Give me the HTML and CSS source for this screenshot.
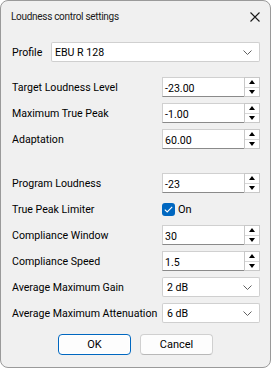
FILE: index.html
```html
<!DOCTYPE html>
<html lang="en">
<head>
    <meta charset="UTF-8">
    <title>Loudness control settings</title>
    <link rel="stylesheet" href="styles.css">
</head>
<body>
    <div class="dialog">
        <div class="titlebar">
            <span class="title">Loudness control settings</span>
            <svg class="close" width="10" height="10" viewBox="0 0 10 10">
                <path d="M0.5 0.5 L9.5 9.5 M9.5 0.5 L0.5 9.5" stroke="#1a1a1a" stroke-width="1.1" fill="none"/>
            </svg>
        </div>

        <div class="content">
            <div class="profile-row">
                <span class="label">Profile</span>
                <div class="combo profile-combo">
                    <span>EBU R 128</span>
                    <svg class="chevron" width="9" height="5" viewBox="0 0 9 5"><path d="M0.5 0.5 L4.5 4.5 L8.5 0.5" stroke="#606060" fill="none"/></svg>
                </div>
            </div>

            <div class="group group-target">
                <div class="row">
                    <span class="label">Target Loudness Level</span>
                    <div class="spinbox"><span class="value">-23.00</span><div class="spin"><div class="up"></div><div class="down"></div></div></div>
                </div>
                <div class="row">
                    <span class="label">Maximum True Peak</span>
                    <div class="spinbox"><span class="value">-1.00</span><div class="spin"><div class="up"></div><div class="down"></div></div></div>
                </div>
                <div class="row">
                    <span class="label">Adaptation</span>
                    <div class="spinbox"><span class="value">60.00</span><div class="spin"><div class="up"></div><div class="down"></div></div></div>
                </div>
            </div>

            <div class="group group-program">
                <div class="row">
                    <span class="label">Program Loudness</span>
                    <div class="spinbox"><span class="value">-23</span><div class="spin"><div class="up"></div><div class="down"></div></div></div>
                </div>
                <div class="row">
                    <span class="label">True Peak Limiter</span>
                    <label class="check">
                        <span class="box"><svg width="9" height="7" viewBox="0 0 9 7"><path d="M0.8 3.6 L3.2 5.9 L8.2 0.9" stroke="#fff" stroke-width="1.1" fill="none"/></svg></span>
                        On
                    </label>
                </div>
                <div class="row">
                    <span class="label">Compliance Window</span>
                    <div class="spinbox"><span class="value">30</span><div class="spin"><div class="up"></div><div class="down"></div></div></div>
                </div>
                <div class="row">
                    <span class="label">Compliance Speed</span>
                    <div class="spinbox"><span class="value">1.5</span><div class="spin"><div class="up"></div><div class="down"></div></div></div>
                </div>
                <div class="row">
                    <span class="label">Average Maximum Gain</span>
                    <div class="combo">
                        <span>2 dB</span>
                        <svg class="chevron" width="9" height="5" viewBox="0 0 9 5"><path d="M0.5 0.5 L4.5 4.5 L8.5 0.5" stroke="#606060" fill="none"/></svg>
                    </div>
                </div>
                <div class="row">
                    <span class="label">Average Maximum Attenuation</span>
                    <div class="combo">
                        <span>6 dB</span>
                        <svg class="chevron" width="9" height="5" viewBox="0 0 9 5"><path d="M0.5 0.5 L4.5 4.5 L8.5 0.5" stroke="#606060" fill="none"/></svg>
                    </div>
                </div>
            </div>

            <div class="buttons">
                <button class="btn btn-default">OK</button>
                <button class="btn">Cancel</button>
            </div>
        </div>
    </div>
</body>
</html>
```

FILE: styles.css
```css
body {
    margin: 0;
    background: #ffffff;
    font-family: Roboto, "Noto Sans", sans-serif;
    font-size: 10.6px;
    color: #000;
}

.dialog {
    width: 269px;
    height: 366px;
    background: #f0f0f0;
    border: 1px solid #9a9a9a;
    border-radius: 8px;
    overflow: hidden;
}

.titlebar {
    height: 31px;
    display: flex;
    align-items: center;
    justify-content: space-between;
    padding: 0 10px 0 10px;
}

.title {
    color: #1a1a1a;
    font-size: 10px;
    letter-spacing: -0.3px;
}

.close {
    margin-top: 1px;
}

.content {
    padding: 10px 10px 0 11px;
}

.profile-row {
    display: flex;
    align-items: center;
    height: 20px;
}

.profile-row .label {
    width: 39px;
}

.group {
    display: flex;
    flex-direction: column;
    gap: 6px;
}

.group-target {
    margin-top: 15px;
}

.group-program {
    margin-top: 24px;
}

.row {
    display: flex;
    align-items: center;
    height: 20px;
}

.row .label {
    width: 150px;
    flex: none;
    white-space: nowrap;
}

.combo,
.spinbox {
    flex: 1;
    height: 18px;
    background: #fff;
    border: 1px solid #d0d0d0;
    border-bottom-color: #8a8a8a;
    display: flex;
    align-items: center;
}

.combo {
    justify-content: space-between;
    padding: 0 7px 0 4px;
    border-radius: 2px;
    border-bottom-color: #cfcfcf;
}

.profile-combo {
    padding-left: 3px;
}

.chevron {
    margin-top: 1px;
}

.spinbox {
    border-right: none;
    border-bottom: 1px solid #8a8a8a;
}

.spinbox .value {
    flex: 1;
    padding-left: 2px;
    padding-top: 2px;
}

.spin {
    width: 16px;
    height: 20px;
    align-self: flex-start;
    display: flex;
    flex-direction: column;
    border: 1px solid #c8c8c8;
    box-sizing: border-box;
    position: relative;
    top: -1px;
    background: #fff;
}

.spin .up,
.spin .down {
    flex: 1;
    display: flex;
    align-items: center;
    justify-content: center;
}

.spin .up {
    border-bottom: 1px solid #d8d8d8;
}

.spin .up::before {
    content: "";
    border-left: 3.5px solid transparent;
    border-right: 3.5px solid transparent;
    border-bottom: 4px solid #000;
}

.spin .down::before {
    content: "";
    border-left: 3.5px solid transparent;
    border-right: 3.5px solid transparent;
    border-top: 4px solid #000;
}

.check {
    display: flex;
    align-items: center;
    gap: 3px;
    font-size: 11px;
}

.check .box {
    width: 13px;
    height: 13px;
    background: #0067c0;
    border-radius: 3px;
    display: flex;
    align-items: center;
    justify-content: center;
}

.buttons {
    display: flex;
    justify-content: center;
    gap: 9px;
    margin-top: 11px;
    padding-right: 1px;
}

.btn {
    width: 73px;
    height: 21px;
    background: #fdfdfd;
    border: 1px solid #d0d0d0;
    border-bottom-color: #b8b8b8;
    border-radius: 4px;
    font-family: Roboto, "Noto Sans", sans-serif;
    font-size: 11px;
    color: #000;
    padding: 0;
}

.btn-default {
    border: 1px solid #0067c0;
    box-shadow: inset 0 0 0 1px #fff;
}
```
